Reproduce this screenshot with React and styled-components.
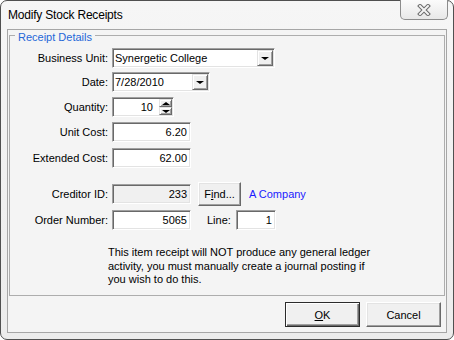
import React from 'react';
import styled, { createGlobalStyle, css } from 'styled-components';

const GlobalStyle = createGlobalStyle`
  html, body {
    margin: 0;
    padding: 0;
    background: #ffffff;
  }
  body {
    font-family: "Liberation Sans", Arial, sans-serif;
    font-size: 11px;
    color: #000000;
  }
`;

const Window = styled.div`
  box-sizing: border-box;
  width: 454px;
  height: 340px;
  display: flex;
  flex-direction: column;
  padding: 0 6px 6px 6px;
  border: 1px solid #505050;
  border-radius: 7px;
  background: linear-gradient(#f6f6f6, #ececec);
`;

const TitleBar = styled.div`
  height: 28px;
  display: flex;
  justify-content: space-between;
  align-items: flex-start;
`;

const Title = styled.div`
  padding: 7px 0 0 1px;
  font-size: 12px;
  line-height: 15px;
  letter-spacing: -0.2px;
  color: #000000;
`;

const CloseButton = styled.div`
  box-sizing: border-box;
  width: 48px;
  height: 20px;
  margin: -1px -1px 0 0;
  display: flex;
  align-items: center;
  justify-content: center;
  border: 1px solid #8c8c8c;
  border-top: none;
  border-radius: 0 0 5px 5px;
  background: linear-gradient(#fbfbfb, #e8e8e8);
`;

const Client = styled.div`
  flex: 1;
  display: flex;
  flex-direction: column;
  border: 1px solid #a6a6a6;
  background: #f4f4f4;
`;

const GroupBox = styled.fieldset`
  flex: 1;
  min-width: 0;
  margin: -2px 1px 0 1px;
  padding: 0;
  border: 1px solid #adadad;
  display: flex;
  flex-direction: column;
`;

const Caption = styled.legend`
  margin-left: 5px;
  padding: 3px 3px 0 3px;
  line-height: 12px;
  font-size: 11px;
  color: #2467d8;
`;

const Row = styled.div`
  display: grid;
  grid-template-columns: 98px auto;
  column-gap: 4px;
  align-items: center;
  height: ${p => p.$h || 20}px;
  margin-top: ${p => p.$mt}px;
`;

const Label = styled.span`
  text-align: right;
  white-space: nowrap;
  margin-left: ${p => p.$ml || 0}px;
`;

const Inline = styled.div`
  display: flex;
  align-items: center;
`;

const Field = styled.div`
  box-sizing: border-box;
  width: ${p => p.$w}px;
  height: 20px;
  margin-left: ${p => p.$ml || 0}px;
  display: flex;
  align-items: center;
  border: 1px solid;
  border-color: #a0a0a0 #ffffff #ffffff #a0a0a0;
  box-shadow: inset 1px 1px 0 #696969, inset -1px -1px 0 #e3e3e3;
  background: ${p => (p.$disabled ? '#f0f0f0' : '#ffffff')};
  padding: 1px;
`;

const Value = styled.span`
  flex: 1;
  text-align: ${p => (p.$right ? 'right' : 'left')};
  padding: ${p => (p.$right ? '0 2px 0 0' : '0 0 0 1px')};
  white-space: nowrap;
  overflow: hidden;
`;

const raised = css`
  border: 1px solid;
  border-color: #e3e3e3 #696969 #696969 #e3e3e3;
  box-shadow: inset 1px 1px 0 #ffffff, inset -1px -1px 0 #a0a0a0;
  background: #f0f0f0;
`;

const DropButton = styled.div`
  box-sizing: border-box;
  width: 16px;
  height: 16px;
  display: flex;
  align-items: center;
  justify-content: center;
  ${raised}
`;

const Spinner = styled.div`
  width: 13px;
  height: 16px;
  display: flex;
  flex-direction: column;
  margin-left: 4px;
`;

const SpinButton = styled.div`
  box-sizing: border-box;
  height: 8px;
  display: flex;
  align-items: center;
  justify-content: center;
  ${raised}
`;

const Arrow = styled.span`
  width: 0;
  height: 0;
  border-left: ${p => p.$size}px solid transparent;
  border-right: ${p => p.$size}px solid transparent;
  ${p => (p.$up
    ? css`border-bottom: ${p.$size - 1}px solid #000;`
    : css`border-top: ${p.$size - 1}px solid #000;`)}
`;

const PushButton = styled.button`
  box-sizing: border-box;
  width: ${p => p.$w}px;
  height: ${p => p.$h}px;
  margin-left: ${p => p.$ml || 0}px;
  padding: 0;
  font-family: "Liberation Sans", Arial, sans-serif;
  font-size: 11px;
  color: #000000;
  background: #f0f0f0;
  border: 1px solid;
  border-color: #ffffff #696969 #696969 #ffffff;
  box-shadow: inset -1px -1px 0 #a0a0a0, inset 1px 1px 0 #e3e3e3;
  ${p => p.$default && css`
    border-color: #2b2b2b;
    box-shadow: inset 1px 1px 0 #ffffff, inset -1px -1px 0 #696969, inset -2px -2px 0 #a0a0a0;
  `}
`;

const LinkText = styled.span`
  margin-left: 8px;
  color: #1b1bff;
`;

const Note = styled.p`
  margin: 16px 0 0 98px;
  width: 274px;
  line-height: 13.5px;
`;

const ButtonBar = styled.div`
  display: flex;
  justify-content: flex-end;
  gap: 6px;
  padding: 6px 5px 5px 0;
`;

const CloseGlyph = () => (
  <svg width="14" height="12" viewBox="0 0 14 12">
    <path d="M3 2 L11 10 M11 2 L3 10" stroke="#6b6b6b" strokeWidth="4" strokeLinecap="square" fill="none" />
    <path d="M3 2 L11 10 M11 2 L3 10" stroke="#f4f4f4" strokeWidth="2" strokeLinecap="square" fill="none" />
  </svg>
);

const Combo = ({ width, value }) => (
  <Field $w={width}>
    <Value>{value}</Value>
    <DropButton><Arrow $size={4} /></DropButton>
  </Field>
);

export default function App() {
  return (
    <>
      <GlobalStyle />
      <Window>
        <TitleBar>
          <Title>Modify Stock Receipts</Title>
          <CloseButton><CloseGlyph /></CloseButton>
        </TitleBar>
        <Client>
          <GroupBox>
            <Caption>Receipt Details</Caption>
            <Row $mt={5}>
              <Label>Business Unit:</Label>
              <Combo width={163} value="Synergetic College" />
            </Row>
            <Row $mt={4}>
              <Label>Date:</Label>
              <Combo width={98} value="7/28/2010" />
            </Row>
            <Row $mt={5}>
              <Label>Quantity:</Label>
              <Field $w={62}>
                <Value $right>10</Value>
                <Spinner>
                  <SpinButton><Arrow $up $size={4} /></SpinButton>
                  <SpinButton><Arrow $size={4} /></SpinButton>
                </Spinner>
              </Field>
            </Row>
            <Row $mt={5}>
              <Label>Unit Cost:</Label>
              <Field $w={79}><Value $right>6.20</Value></Field>
            </Row>
            <Row $mt={6}>
              <Label>Extended Cost:</Label>
              <Field $w={79}><Value $right>62.00</Value></Field>
            </Row>
            <Row $mt={14} $h={24}>
              <Label>Creditor ID:</Label>
              <Inline>
                <Field $w={79} $disabled><Value $right>233</Value></Field>
                <PushButton $w={43} $h={24} $ml={7}>F<u>i</u>nd...</PushButton>
                <LinkText>A Company</LinkText>
              </Inline>
            </Row>
            <Row $mt={4}>
              <Label>Order Number:</Label>
              <Inline>
                <Field $w={79}><Value $right>5065</Value></Field>
                <Label $ml={16}>Line:</Label>
                <Field $w={40} $ml={5}><Value $right>1</Value></Field>
              </Inline>
            </Row>
            <Note>
              This item receipt will NOT produce any general ledger activity, you must manually create a journal posting if you wish to do this.
            </Note>
          </GroupBox>
          <ButtonBar>
            <PushButton $w={75} $h={25} $default><u>O</u>K</PushButton>
            <PushButton $w={75} $h={25}>Cancel</PushButton>
          </ButtonBar>
        </Client>
      </Window>
    </>
  );
}
